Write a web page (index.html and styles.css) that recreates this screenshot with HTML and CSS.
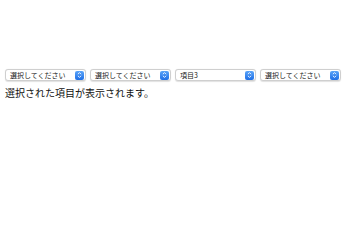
FILE: index.html
```html
<!DOCTYPE html>
<html lang="ja">
<head>
<meta charset="utf-8">
<link rel="stylesheet" href="styles.css">
</head>
<body>
<div class="row">
  <div class="sel"><span class="label">選択してください</span><span class="btn"><svg viewBox="0 0 8 10" width="8" height="10"><path d="M2 4 L4 2 L6 4 M2 6 L4 8 L6 6" fill="none" stroke="#fff" stroke-width="1.1"/></svg></span></div>
  <div class="sel"><span class="label">選択してください</span><span class="btn"><svg viewBox="0 0 8 10" width="8" height="10"><path d="M2 4 L4 2 L6 4 M2 6 L4 8 L6 6" fill="none" stroke="#fff" stroke-width="1.1"/></svg></span></div>
  <div class="sel"><span class="label">項目3</span><span class="btn"><svg viewBox="0 0 8 10" width="8" height="10"><path d="M2 4 L4 2 L6 4 M2 6 L4 8 L6 6" fill="none" stroke="#fff" stroke-width="1.1"/></svg></span></div>
  <div class="sel"><span class="label">選択してください</span><span class="btn"><svg viewBox="0 0 8 10" width="8" height="10"><path d="M2 4 L4 2 L6 4 M2 6 L4 8 L6 6" fill="none" stroke="#fff" stroke-width="1.1"/></svg></span></div>
</div>
<p class="msg">選択された項目が表示されます。</p>
</body>
</html>
```
FILE: styles.css
```css
html, body {
  margin: 0;
  padding: 0;
  background: #fff;
}
body {
  font-family: "Noto Sans CJK JP", "Noto Sans", sans-serif;
  color: #111;
}
.row {
  display: flex;
  gap: 4px;
  margin: 69px 0 0 5px;
}
.sel {
  box-sizing: border-box;
  width: 81px;
  height: 12px;
  border: 1px solid #cfcfcf;
  border-radius: 3px;
  background: #fff;
  display: flex;
  align-items: center;
  justify-content: space-between;
  padding: 0 1px 0 4px;
  box-shadow: 0 0.5px 1px rgba(0,0,0,0.12);
}
.label {
  font-size: 7px;
  line-height: 10px;
  color: #222;
  white-space: nowrap;
}
.btn {
  width: 9px;
  height: 9px;
  border-radius: 2px;
  background: linear-gradient(#5aa4f8, #1f6fe6);
  display: flex;
  align-items: center;
  justify-content: center;
}
.btn svg {
  width: 7px;
  height: 8px;
  display: block;
}
.msg {
  margin: 5px 0 0 5px;
  font-size: 10px;
  line-height: 14px;
  color: #111;
}
```
